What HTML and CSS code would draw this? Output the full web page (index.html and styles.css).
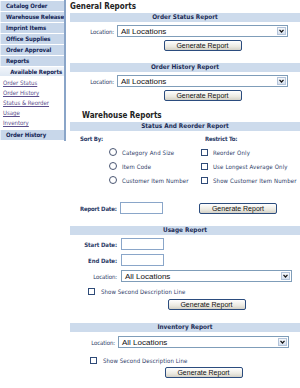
FILE: index.html
```html
<!DOCTYPE html>
<html lang="en">
<head>
    <meta charset="UTF-8">
    <title>Reports</title>
    <link rel="stylesheet" href="styles.css">
</head>
<body>
    <div class="page">
        <div class="sidebar">
            <div class="nav-item">Catalog Order</div>
            <div class="nav-item">Warehouse Release</div>
            <div class="nav-item">Imprint Items</div>
            <div class="nav-item">Office Supplies</div>
            <div class="nav-item">Order Approval</div>
            <div class="nav-item">Reports</div>
            <div class="nav-sub">Available Reports</div>
            <div class="nav-links">
                <a class="nav-link" href="#">Order Status</a>
                <a class="nav-link" href="#">Order History</a>
                <a class="nav-link" href="#">Status &amp; Reorder</a>
                <a class="nav-link" href="#">Usage</a>
                <a class="nav-link" href="#">Inventory</a>
            </div>
            <div class="nav-item">Order History</div>
        </div>

        <div class="main">
            <h1 class="title">General Reports</h1>

            <div class="report">
                <div class="bar">Order Status Report</div>
                <div class="form-row">
                    <span class="form-label">Location:</span>
                    <div class="select"><span>All Locations</span><span class="select-arrow"><svg width="5" height="4" viewBox="0 0 5 4"><path d="M0.5 0.8 L2.5 3 L4.5 0.8" fill="none" stroke="#111" stroke-width="1.2"/></svg></span></div>
                </div>
                <div class="form-row btn-row">
                    <span class="form-label"></span>
                    <div class="field-center"><button class="btn">Generate Report</button></div>
                </div>
            </div>

            <div class="report">
                <div class="bar">Order History Report</div>
                <div class="form-row">
                    <span class="form-label">Location:</span>
                    <div class="select"><span>All Locations</span><span class="select-arrow"><svg width="5" height="4" viewBox="0 0 5 4"><path d="M0.5 0.8 L2.5 3 L4.5 0.8" fill="none" stroke="#111" stroke-width="1.2"/></svg></span></div>
                </div>
                <div class="form-row btn-row">
                    <span class="form-label"></span>
                    <div class="field-center"><button class="btn">Generate Report</button></div>
                </div>
            </div>

            <h1 class="title sub">Warehouse Reports</h1>

            <div class="report">
                <div class="bar">Status And Reorder Report</div>
                <div class="options">
                    <div class="opt-head">Sort By:</div>
                    <div class="opt-head right">Restrict To:</div>

                    <label class="opt radio"><input type="radio" name="sort"> Category And Size</label>
                    <label class="opt"><input type="checkbox"> Reorder Only</label>

                    <label class="opt radio"><input type="radio" name="sort"> Item Code</label>
                    <label class="opt"><input type="checkbox"> Use Longest Average Only</label>

                    <label class="opt radio"><input type="radio" name="sort"> Customer Item Number</label>
                    <label class="opt"><input type="checkbox"> Show Customer Item Number</label>
                </div>
                <div class="date-row">
                    <span class="date-label">Report Date:</span>
                    <input class="text-input" type="text">
                    <button class="btn">Generate Report</button>
                </div>
            </div>

            <div class="report usage">
                <div class="bar">Usage Report</div>
                <div class="form-row first">
                    <span class="form-label bold">Start Date:</span>
                    <input class="text-input" type="text">
                </div>
                <div class="form-row">
                    <span class="form-label bold">End Date:</span>
                    <input class="text-input" type="text">
                </div>
                <div class="form-row">
                    <span class="form-label">Location:</span>
                    <div class="select"><span>All Locations</span><span class="select-arrow"><svg width="5" height="4" viewBox="0 0 5 4"><path d="M0.5 0.8 L2.5 3 L4.5 0.8" fill="none" stroke="#111" stroke-width="1.2"/></svg></span></div>
                </div>
                <label class="check-row"><input type="checkbox"> Show Second Description Line</label>
                <div class="form-row btn-row">
                    <span class="form-label"></span>
                    <div class="field-center"><button class="btn">Generate Report</button></div>
                </div>
            </div>

            <div class="report inventory">
                <div class="bar">Inventory Report</div>
                <div class="form-row">
                    <span class="form-label">Location:</span>
                    <div class="select"><span>All Locations</span><span class="select-arrow"><svg width="5" height="4" viewBox="0 0 5 4"><path d="M0.5 0.8 L2.5 3 L4.5 0.8" fill="none" stroke="#111" stroke-width="1.2"/></svg></span></div>
                </div>
                <label class="check-row"><input type="checkbox"> Show Second Description Line</label>
                <div class="form-row btn-row">
                    <span class="form-label"></span>
                    <div class="field-center"><button class="btn">Generate Report</button></div>
                </div>
            </div>
        </div>
    </div>
</body>
</html>
```

FILE: styles.css
```css
body {
    margin: 0;
    font-family: "DejaVu Sans Condensed", "DejaVu Sans", Verdana, sans-serif;
    font-stretch: condensed;
    color: #1d2d57;
    background: #fff;
}
.page {
    display: flex;
    align-items: flex-start;
}

/* left menu */
.sidebar {
    width: 64px;
    padding-top: 1px;
    border-right: 2px solid #8aa5c8;
    display: flex;
    flex-direction: column;
}
.nav-item {
    height: 10px;
    line-height: 10px;
    margin-bottom: 1px;
    padding-left: 5px;
    background: #c8d7ea;
    border-left: 1px solid #e6edf6;
    font-size: 6px;
    font-weight: bold;
    letter-spacing: -0.1px;
    color: #142656;
    white-space: nowrap;
    overflow: hidden;
}
.nav-sub {
    height: 9px;
    line-height: 9px;
    text-align: right;
    padding-right: 2px;
    background: linear-gradient(#f1f5fa, #dfe8f3);
    font-size: 6px;
    font-weight: bold;
    letter-spacing: -0.1px;
    color: #142656;
    white-space: nowrap;
    overflow: hidden;
}
.nav-links {
    display: flex;
    flex-direction: column;
    padding: 2px 0 2px 3px;
}
.nav-link {
    height: 10px;
    line-height: 10px;
    font-size: 6px;
    color: #5b4e8c;
}

/* content */
.main {
    width: 230px;
    margin-left: 4px;
}
.title {
    margin: 1px 0 1px;
    height: 11px;
    font-size: 8px;
    line-height: 11px;
    font-weight: bold;
    color: #222;
}
.title.sub {
    margin: -2px 0 2px 12px;
    height: 9px;
    line-height: 9px;
}
.report {
    margin-bottom: 12px;
}
.bar {
    height: 9px;
    line-height: 9px;
    background: #cddbec;
    text-align: center;
    font-size: 6.4px;
    font-weight: bold;
    color: #1b2b55;
}
.form-row {
    display: flex;
    align-items: center;
    gap: 3px;
    height: 12px;
    margin-top: 3px;
}
.form-row.btn-row {
    height: 11px;
}
.form-label {
    width: 44px;
    text-align: right;
    font-size: 6px;
    letter-spacing: -0.1px;
    color: #2b3a66;
    white-space: nowrap;
}
.form-label.bold {
    font-weight: bold;
}
.select {
    box-sizing: border-box;
    width: 171px;
    height: 12px;
    display: flex;
    align-items: center;
    justify-content: space-between;
    padding: 0 1px 0 3px;
    border: 1px solid #7f9db9;
    background: #fff;
    font-family: "Liberation Sans", Arial, sans-serif;
    font-stretch: normal;
    font-size: 8px;
    color: #111;
}
.select-arrow {
    width: 9px;
    height: 8px;
    display: flex;
    align-items: center;
    justify-content: center;
    box-sizing: border-box;
    border: 1px solid #b3c4da;
    background: linear-gradient(#f6f8fb, #d6e0ee);
}
.field-center {
    width: 171px;
    display: flex;
    justify-content: center;
}
.btn {
    box-sizing: border-box;
    width: 78px;
    height: 11px;
    margin: 0;
    padding: 0;
    border: 1px solid #2b4c7e;
    border-radius: 2px;
    background: linear-gradient(#ffffff, #eceae2 60%, #d4d1c6);
    font-family: "Liberation Sans", Arial, sans-serif;
    font-size: 7px;
    line-height: 9px;
    color: #111;
}

/* status and reorder */
.options {
    display: grid;
    grid-template-columns: 121px 1fr;
    grid-template-rows: 8px repeat(3, 10px);
    row-gap: 4px;
    padding-left: 10px;
    margin-top: 4px;
}
.opt-head {
    font-size: 6px;
    line-height: 8px;
    font-weight: bold;
    letter-spacing: -0.2px;
    color: #2b3a66;
}
.opt-head.right {
    padding-left: 4px;
}
.opt {
    display: flex;
    align-items: center;
    gap: 5px;
    font-size: 6px;
    letter-spacing: 0.15px;
    color: #2b3a66;
    white-space: nowrap;
}
.opt.radio {
    padding-left: 29px;
}
input[type="radio"],
input[type="checkbox"] {
    appearance: none;
    margin: 0;
    width: 7px;
    height: 7px;
    box-sizing: border-box;
    background: #fff;
    flex: none;
}
input[type="radio"] {
    width: 8px;
    height: 8px;
    border: 1px solid #4a5672;
    border-radius: 50%;
}
input[type="checkbox"] {
    border: 1px solid #2f4b78;
}
.date-row {
    display: flex;
    align-items: center;
    height: 12px;
    margin: 17px 0 3px;
    padding-left: 10px;
}
.date-label {
    width: 36px;
    font-size: 6px;
    font-weight: bold;
    letter-spacing: -0.2px;
    color: #2b3a66;
    white-space: nowrap;
}
.text-input {
    box-sizing: border-box;
    width: 43px;
    height: 12px;
    margin: 0 0 0 4px;
    border: 1px solid #8aa6c9;
    padding: 0;
}
.date-row .btn {
    flex: none;
    margin-left: 36px;
}
.form-row .text-input {
    margin: 0;
}
.check-row {
    display: flex;
    align-items: center;
    gap: 6px;
    height: 8px;
    padding-left: 20px;
    font-size: 6px;
    letter-spacing: 0.1px;
    color: #2b3a66;
    white-space: nowrap;
}

/* usage block sits a few pixels further right */
.usage .form-row {
    gap: 4px;
    margin-top: 4px;
}
.usage .form-row.first {
    margin-top: 3px;
}
.usage .form-label {
    width: 47px;
}
.usage .check-row {
    padding-left: 18px;
    margin-top: 5px;
}
.usage .btn-row {
    margin-top: 4px;
}
.inventory {
    margin-top: 13px;
}
.inventory .form-label {
    width: 45px;
}
.inventory .form-row {
    margin-top: 4px;
}
.inventory .check-row {
    margin-top: 8px;
}
.inventory .btn-row {
    margin-top: 3px;
}
```
